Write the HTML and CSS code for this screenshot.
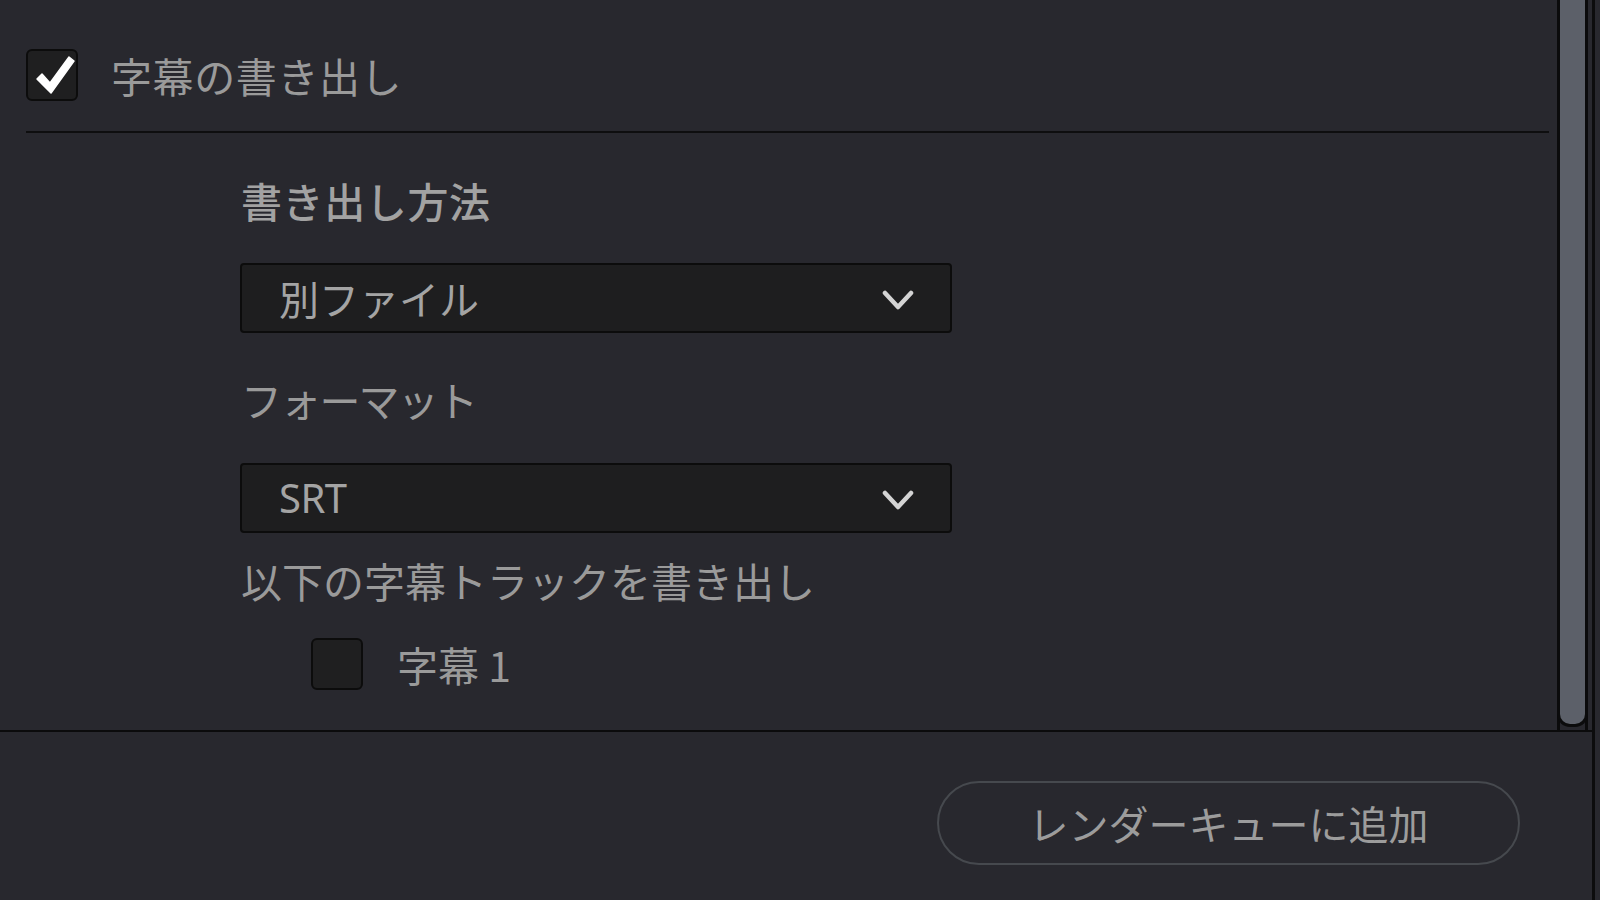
FILE: index.html
```html
<!DOCTYPE html>
<html lang="ja">
<head>
<meta charset="utf-8">
<title>字幕の書き出し</title>
<link rel="stylesheet" href="styles.css">
</head>
<body>
<div class="app">
  <div class="panel">
    <div class="main">
      <div class="content">
        <div class="header">
          <span class="checkbox checked">
            <svg viewBox="0 0 52 52" width="52" height="52"><path d="M11 30 L16 25 L24 34 L43 8 L48 12 L25 44 Z" fill="#ffffff" stroke="#ffffff" stroke-width="1.5" stroke-linejoin="round"/></svg>
          </span>
          <span class="title">字幕の書き出し</span>
        </div>
        <div class="divider"></div>
        <div class="section">
          <div class="label strong first">書き出し方法</div>
          <div class="select gap-a">
            <span class="select-text">別ファイル</span>
            <svg class="chev" viewBox="0 0 32 20" width="32" height="20"><polyline points="3,3 16,17 29,3" fill="none" stroke="#d4d4d4" stroke-width="4.5" stroke-linecap="round" stroke-linejoin="round"/></svg>
          </div>
          <div class="label narrow gap-b">フォーマット</div>
          <div class="select gap-c">
            <span class="select-text latin">SRT</span>
            <svg class="chev" viewBox="0 0 32 20" width="32" height="20"><polyline points="3,3 16,17 29,3" fill="none" stroke="#d4d4d4" stroke-width="4.5" stroke-linecap="round" stroke-linejoin="round"/></svg>
          </div>
          <div class="label gap-d">以下の字幕トラックを書き出し</div>
          <div class="track">
            <span class="checkbox"></span>
            <span class="track-text">字幕 1</span>
          </div>
        </div>
      </div>
      <div class="scrollbar"><div class="thumb"></div></div>
    </div>
    <div class="footer">
      <button class="pill">レンダーキューに追加</button>
    </div>
  </div>
</div>
</body>
</html>
```

FILE: styles.css
```css
html, body {
  margin: 0;
  padding: 0;
  background: #28282e;
}

body {
  width: 1600px;
  height: 900px;
  overflow: hidden;
  font-family: "Noto Sans CJK JP", "Noto Sans", sans-serif;
  color: #9c9c9c;
}

.app {
  width: 1600px;
  height: 900px;
  display: flex;
}

.panel {
  width: 1592px;
  height: 900px;
  border-right: 3px solid #0c0c0d;
  display: flex;
  flex-direction: column;
  background: #28282e;
}

.main {
  height: 730px;
  display: flex;
  border-bottom: 2px solid #0b0b0c;
}

.content {
  flex: 1;
  min-width: 0;
}

.header {
  display: flex;
  align-items: center;
  padding: 49px 0 0 26px;
  height: 52px;
}

.checkbox {
  width: 48px;
  height: 48px;
  border: 2px solid #0c0c0c;
  border-radius: 6px;
  background: #1f1f20;
  display: flex;
  align-items: center;
  justify-content: center;
  flex: none;
  box-sizing: content-box;
}

.checkbox svg {
  display: block;
  margin: -2px;
}

.title {
  margin-left: 33px;
  font-size: 41px;
  line-height: 48px;
  color: #9a9a9a;
  letter-spacing: 0.6px;
}

.divider {
  margin: 30px 8px 0 26px;
  height: 2px;
  background: #0e0e0f;
}

.section {
  padding-left: 240px;
  display: flex;
  flex-direction: column;
  align-items: flex-start;
}

.label {
  font-size: 41px;
  line-height: 48px;
  color: #9a9a9a;
  padding-left: 1px;
}

.label.strong {
  font-weight: 500;
  color: #a2a2a2;
  letter-spacing: 0.6px;
}

.label.narrow {
  letter-spacing: -1.8px;
}

.first { margin-top: 43px; }
.gap-a { margin-top: 39px; }
.gap-b { margin-top: 42px; }
.gap-c { margin-top: 40px; }
.gap-d { margin-top: 23px; }

.select {
  height: 66px;
  border: 2px solid #0c0c0c;
  border-radius: 4px;
  background: #1e1e1f;
  display: flex;
  align-items: center;
  justify-content: space-between;
  padding: 0 36px 0 37px;
  box-sizing: content-box;
  width: 635px;
}

.select-text {
  font-size: 40px;
  line-height: 48px;
  color: #a4a4a4;
}

.select-text.latin {
  font-family: "Noto Sans", "Open Sans", sans-serif;
  font-size: 40px;
  letter-spacing: -0.5px;
}

.chev {
  display: block;
  margin-top: 4px;
}

.track {
  margin-top: 34px;
  margin-left: 71px;
  display: flex;
  align-items: center;
}

.track-text {
  margin-left: 34px;
  font-size: 41px;
  line-height: 48px;
  color: #9a9a9a;
}

.scrollbar {
  width: 25px;
  margin-right: 4px;
  border-left: 3px solid #0b0b0c;
  border-right: 3px solid #0b0b0c;
  display: flex;
  flex-direction: column;
}

.thumb {
  height: 727px;
  background: #5c6069;
  border-bottom: 3px solid #0b0b0c;
  border-radius: 0 0 13px 13px;
  box-sizing: border-box;
  margin: 0 -3px;
  border-left: 3px solid #0b0b0c;
  border-right: 3px solid #0b0b0c;
}

.footer {
  flex: 1;
  display: flex;
  justify-content: flex-end;
  align-items: flex-start;
  padding: 49px 72px 0 0;
}

.pill {
  width: 583px;
  height: 84px;
  border: 2px solid #46494e;
  border-radius: 42px;
  background: transparent;
  font-family: "Noto Sans CJK JP", "Noto Sans", sans-serif;
  font-size: 40px;
  line-height: 48px;
  color: #9c9c9c;
  padding: 0;
  cursor: pointer;
}
```
